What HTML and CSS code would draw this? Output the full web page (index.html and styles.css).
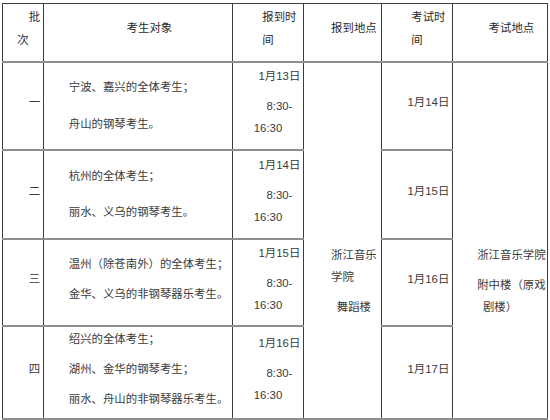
FILE: index.html
```html
<!DOCTYPE html>
<html lang="zh-CN">
<head>
<meta charset="utf-8">
<title>考试安排</title>
<link rel="stylesheet" href="styles.css">
</head>
<body>
<table class="schedule">
  <colgroup>
    <col class="c-batch">
    <col class="c-target">
    <col class="c-time">
    <col class="c-place">
    <col class="c-date">
    <col class="c-venue">
  </colgroup>
  <thead>
    <tr class="head">
      <th>批次</th>
      <th>考生对象</th>
      <th>报到时间</th>
      <th>报到地点</th>
      <th>考试时间</th>
      <th>考试地点</th>
    </tr>
  </thead>
  <tbody>
    <tr class="r1">
      <td>一</td>
      <td class="target loose"><p>宁波、嘉兴的全体考生；</p><p>舟山的钢琴考生。</p></td>
      <td><p>1月13日</p><p>8:30-<wbr>16:30</p></td>
      <td class="merged" rowspan="4"><p>浙江音乐学院</p><p>舞蹈楼</p></td>
      <td>1月14日</td>
      <td class="merged" rowspan="4"><p>浙江音乐学院</p><p>附中楼（原戏剧楼）</p></td>
    </tr>
    <tr class="r2">
      <td>二</td>
      <td class="target loose"><p>杭州的全体考生；</p><p>丽水、义乌的钢琴考生。</p></td>
      <td><p>1月14日</p><p>8:30-<wbr>16:30</p></td>
      <td>1月15日</td>
    </tr>
    <tr class="r3">
      <td>三</td>
      <td class="target"><p>温州（除苍南外）的全体考生；</p><p>金华、义乌的非钢琴器乐考生。</p></td>
      <td><p>1月15日</p><p>8:30-<wbr>16:30</p></td>
      <td>1月16日</td>
    </tr>
    <tr class="r4">
      <td>四</td>
      <td class="target"><p>绍兴的全体考生；</p><p>湖州、金华的钢琴考生；</p><p>丽水、舟山的非钢琴器乐考生。</p></td>
      <td><p>1月16日</p><p>8:30-<wbr>16:30</p></td>
      <td>1月17日</td>
    </tr>
  </tbody>
</table>
</body>
</html>
```

FILE: styles.css
```css
html, body {
  margin: 0;
  padding: 0;
  background: #ffffff;
}

body {
  padding: 3px 0 0 2px;
  font-family: "Liberation Sans", "Noto Sans CJK SC", sans-serif;
  font-size: 11.4px;
  line-height: 22px;
  color: #3a3a3a;
}

.schedule {
  border-collapse: collapse;
  table-layout: fixed;
  width: 546px;
}

.c-batch { width: 41px; }
.c-target { width: 189px; }
.c-time { width: 71px; }
.c-place { width: 78px; }
.c-date { width: 71px; }
.c-venue { width: 95px; }

.schedule th,
.schedule td {
  border-left: 1px solid #3c3c3c;
  border-right: 1px solid #3c3c3c;
  border-top: 2px solid #8e8e8e;
  border-bottom: 2px solid #8e8e8e;
  padding: 0 1px 7px;
  vertical-align: middle;
  text-align: center;
  text-indent: 2em;
  font-weight: normal;
}

.schedule th {
  color: #2a2a2a;
  line-height: 23px;
  border-top: 1px solid #3c3c3c;
  border-bottom: 1px solid #3c3c3c;
}

.schedule p {
  margin: 0;
}

.schedule p + p {
  margin-top: 8px;
}

.schedule .target {
  text-align: left;
  padding-left: 2px;
}

.schedule .loose {
  padding-bottom: 0;
}

.schedule .loose p + p {
  margin-top: 14.7px;
}

.schedule .merged {
  padding-top: 82px;
  padding-bottom: 0;
}

.head { height: 58px; }
.r1 { height: 88px; }
.r2 { height: 89px; }
.r3 { height: 87px; }
.r4 { height: 93px; }
```
